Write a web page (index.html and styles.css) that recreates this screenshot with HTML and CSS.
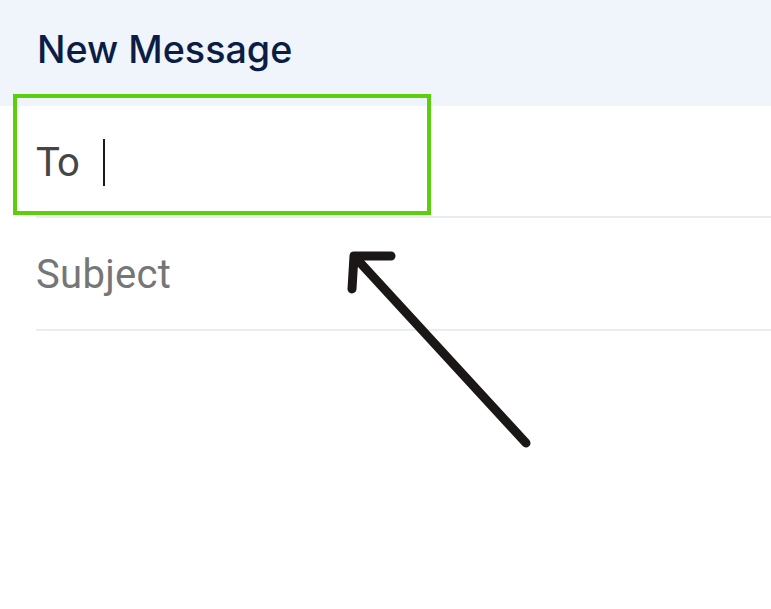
FILE: index.html
```html
<!DOCTYPE html>
<html lang="en">
<head>
<meta charset="utf-8">
<title>New Message</title>
<link rel="stylesheet" href="styles.css">
</head>
<body>
<div class="compose">
  <header class="compose-header">
    <h1 class="compose-title">New Message</h1>
  </header>
  <div class="field field-to">
    <span class="field-label">To</span>
    <span class="cursor"></span>
  </div>
  <div class="field field-subject">
    <span class="field-placeholder">Subject</span>
  </div>
  <div class="highlight"></div>
  <svg class="pointer-arrow" width="771" height="609" viewBox="0 0 771 609" aria-hidden="true">
    <path d="M526 443 L354 256 M352 289 L354 256 L391 256" fill="none" stroke="#1b1717" stroke-width="9" stroke-linecap="round" stroke-linejoin="round"/>
  </svg>
</div>
</body>
</html>
```
FILE: styles.css
```css
html, body {
  margin: 0;
  padding: 0;
  background: #ffffff;
}

.compose {
  position: relative;
  width: 771px;
  height: 609px;
  overflow: hidden;
  background: #ffffff;
}

.compose-header {
  height: 106px;
  box-sizing: border-box;
  padding: 26px 0 0 37px;
  background: #f0f4fb;
}

.compose-title {
  margin: 0;
  font-family: Inter, "Noto Sans", sans-serif;
  font-weight: 500;
  font-size: 37.7px;
  line-height: normal;
  color: #0b1d45;
}

.field {
  display: flex;
  align-items: flex-start;
  margin-left: 36px;
  padding: 33px 0 31px;
  border-bottom: 2px solid #e9ecf0;
  font-family: Roboto, "Liberation Sans", sans-serif;
  font-size: 40px;
  line-height: 47px;
}

.field-to {
  height: 47px;
  padding-bottom: 30px;
}

.field-label {
  color: #454545;
  letter-spacing: -1px;
}

.cursor {
  width: 2px;
  height: 47px;
  margin-left: 24px;
  background: #1a1a1a;
}

.field-placeholder {
  color: #767676;
  letter-spacing: 0.3px;
}

.highlight {
  position: absolute;
  left: 13px;
  top: 94px;
  width: 410px;
  height: 113px;
  border: 4px solid #5ccf0c;
}

.pointer-arrow {
  position: absolute;
  left: 0;
  top: 0;
}
```
